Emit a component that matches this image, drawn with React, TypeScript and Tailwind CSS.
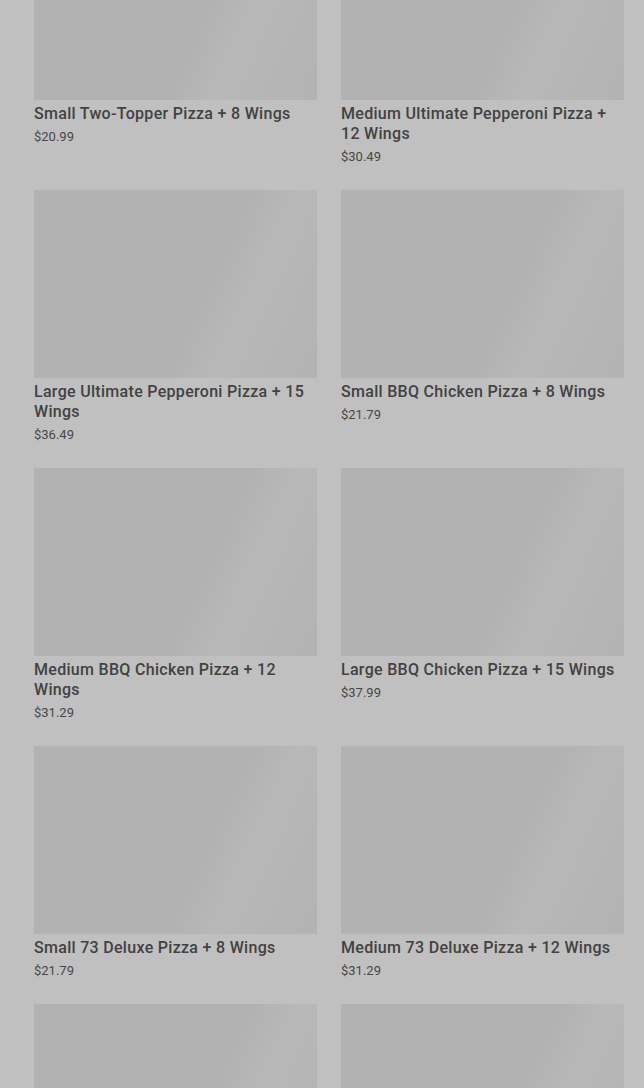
const products = [
  { name: 'Small Two-Topper Pizza + 8 Wings', price: '$20.99' },
  { name: 'Medium Ultimate Pepperoni Pizza + 12 Wings', price: '$30.49' },
  { name: 'Large Ultimate Pepperoni Pizza + 15 Wings', price: '$36.49' },
  { name: 'Small BBQ Chicken Pizza + 8 Wings', price: '$21.79' },
  { name: 'Medium BBQ Chicken Pizza + 12 Wings', price: '$31.29' },
  { name: 'Large BBQ Chicken Pizza + 15 Wings', price: '$37.99' },
  { name: 'Small 73 Deluxe Pizza + 8 Wings', price: '$21.79' },
  { name: 'Medium 73 Deluxe Pizza + 12 Wings', price: '$31.29' },
]

function ImagePlaceholder() {
  return (
    <div className="h-[188px] w-full bg-[linear-gradient(115deg,#b2b2b2_0%,#b2b2b2_60%,#b8b8b8_72%,#b5b5b5_86%,#b3b3b3_100%)]" />
  )
}

function ProductCard({ name, price }: { name: string; price: string }) {
  return (
    <div className="flex flex-col">
      <ImagePlaceholder />
      <p className="mt-[4px] text-[16px] leading-[20px] font-medium tracking-[0.3px] text-[#424242]">{name}</p>
      <p className="mt-[3px] text-[13px] leading-[19px] text-[#474747]">{price}</p>
    </div>
  )
}

export default function App() {
  return (
    <div
      className="h-[1088px] w-[644px] overflow-hidden bg-[#c0c0c0]"
      style={{ fontFamily: 'Roboto, "Noto Sans", sans-serif' }}
    >
      <div className="-mt-[88px] grid grid-cols-2 gap-x-[24px] gap-y-[24px] pl-[34px] pr-[20px]">
        {products.map((p, i) => (
          <ProductCard key={i} name={p.name} price={p.price} />
        ))}
        <ImagePlaceholder />
        <ImagePlaceholder />
      </div>
    </div>
  )
}
